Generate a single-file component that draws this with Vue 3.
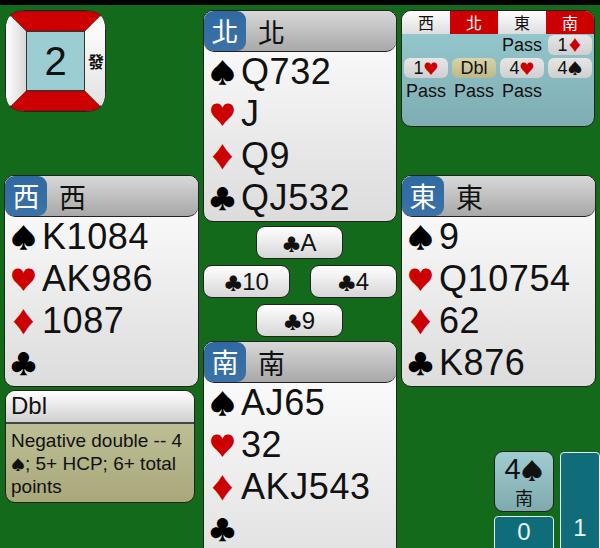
<script setup>
const hands = {
  north: { name: '北', suits: ['Q732', 'J', 'Q9', 'QJ532'] },
  west: { name: '西', suits: ['K1084', 'AK986', '1087', ''] },
  east: { name: '東', suits: ['9', 'Q10754', '62', 'K876'] },
  south: { name: '南', suits: ['AJ65', '32', 'AKJ543', ''] }
}
const suitGlyphs = [
  { g: '♠', red: false },
  { g: '♥', red: true },
  { g: '♦', red: true },
  { g: '♣', red: false }
]
const seats = [
  { n: '西', vul: false },
  { n: '北', vul: true },
  { n: '東', vul: false },
  { n: '南', vul: true }
]
</script>

<template>
  <div class="page">
    <div class="topbar"></div>
    <div class="table">
      <div class="col">
        <div class="board">
          <svg class="board-art" width="101" height="102" viewBox="0 0 101 102">
            <defs>
              <linearGradient id="lside" x1="0" y1="0" x2="1" y2="0">
                <stop offset="0" stop-color="#ffffff" />
                <stop offset="1" stop-color="#d8d8d8" />
              </linearGradient>
              <linearGradient id="rside" x1="0" y1="0" x2="0" y2="1">
                <stop offset="0" stop-color="#ffffff" />
                <stop offset="1" stop-color="#e2e2e2" />
              </linearGradient>
            </defs>
            <rect x="0.5" y="0.5" width="100" height="101" rx="18" fill="#fff" stroke="#222" />
            <path d="M5 6 L21 21 V81 L5 96 Q1 92 1 83 V19 Q1 10 5 6 Z" fill="url(#lside)" />
            <path d="M96 6 L80 21 V81 L96 96 Q100 92 100 83 V19 Q100 10 96 6 Z" fill="url(#rside)" />
            <path d="M5 5 Q10 1 19 1 H82 Q91 1 96 5 L80 21 H21 Z" fill="#cc0000" stroke="#222" stroke-width="0.5" />
            <path d="M5 97 Q10 101 19 101 H82 Q91 101 96 97 L80 81 H21 Z" fill="#cc0000" stroke="#222" stroke-width="0.5" />
          </svg>
          <div class="board-num">2</div>
          <div class="board-dealer">發</div>
        </div>

        <div class="hand">
          <div class="hand-head"><span class="tag">{{ hands.west.name }}</span><span class="hname">{{ hands.west.name }}</span></div>
          <div class="hand-body">
            <div v-for="(s, i) in suitGlyphs" :key="i" class="suit-row">
              <span class="suit" :class="{ red: s.red }">{{ s.g }}</span><span>{{ hands.west.suits[i] }}</span>
            </div>
          </div>
        </div>

        <div class="explain">
          <div class="explain-head">Dbl</div>
          <div class="explain-body">Negative double -- 4 <span class="mini">♠</span>; 5+ HCP; 6+ total points</div>
        </div>
      </div>

      <div class="col">
        <div class="hand">
          <div class="hand-head"><span class="tag">{{ hands.north.name }}</span><span class="hname">{{ hands.north.name }}</span></div>
          <div class="hand-body">
            <div v-for="(s, i) in suitGlyphs" :key="i" class="suit-row">
              <span class="suit" :class="{ red: s.red }">{{ s.g }}</span><span>{{ hands.north.suits[i] }}</span>
            </div>
          </div>
        </div>

        <div class="trick">
          <div class="trick-row center"><div class="played"><span class="psuit">♣</span>A</div></div>
          <div class="trick-row"><div class="played"><span class="psuit">♣</span>10</div><div class="played"><span class="psuit">♣</span>4</div></div>
          <div class="trick-row center"><div class="played"><span class="psuit">♣</span>9</div></div>
        </div>

        <div class="hand south-hand">
          <div class="hand-head"><span class="tag">{{ hands.south.name }}</span><span class="hname">{{ hands.south.name }}</span></div>
          <div class="hand-body">
            <div v-for="(s, i) in suitGlyphs" :key="i" class="suit-row">
              <span class="suit" :class="{ red: s.red }">{{ s.g }}</span><span>{{ hands.south.suits[i] }}</span>
            </div>
          </div>
        </div>
      </div>

      <div class="col">
        <div class="auction">
          <div class="seat-row">
            <div v-for="s in seats" :key="s.n" class="seat" :class="{ vul: s.vul }">{{ s.n }}</div>
          </div>
          <div class="bids">
            <div class="bid"></div>
            <div class="bid"></div>
            <div class="bid">Pass</div>
            <div class="bid chip">1<span class="bsuit red">♦</span></div>
            <div class="bid chip">1<span class="bsuit red">♥</span></div>
            <div class="bid chip gold">Dbl</div>
            <div class="bid chip">4<span class="bsuit red">♥</span></div>
            <div class="bid chip">4<span class="bsuit">♠</span></div>
            <div class="bid">Pass</div>
            <div class="bid">Pass</div>
            <div class="bid">Pass</div>
          </div>
        </div>

        <div class="hand east-hand">
          <div class="hand-head"><span class="tag">{{ hands.east.name }}</span><span class="hname">{{ hands.east.name }}</span></div>
          <div class="hand-body">
            <div v-for="(s, i) in suitGlyphs" :key="i" class="suit-row">
              <span class="suit" :class="{ red: s.red }">{{ s.g }}</span><span>{{ hands.east.suits[i] }}</span>
            </div>
          </div>
        </div>

        <div class="score">
          <div class="score-left">
            <div class="contract">
              <div class="c-bid">4<span class="c-suit">♠</span></div>
              <div class="c-seat">南</div>
            </div>
            <div class="tricks ns">0</div>
          </div>
          <div class="tricks ew">1</div>
        </div>
      </div>
    </div>
  </div>
</template>

<style>
html, body { margin: 0; background: #126a1a; overflow: hidden; }
</style>

<style scoped>
.page {
  width: 600px;
  height: 548px;
  overflow: hidden;
  background: #126a1a;
  font-family: "Liberation Sans", Arial, "Noto Sans CJK TC", sans-serif;
  color: #111;
}
.topbar { height: 5px; background: #000; }
.table {
  display: grid;
  grid-template-columns: 195px 194px 195px;
  column-gap: 4px;
  padding: 5px 0 0 4px;
}
.col { display: flex; flex-direction: column; min-width: 0; }

.board {
  position: relative;
  width: 101px;
  height: 102px;
  margin: 0 0 63px 1px;
}
.board-art { display: block; }
.board-num {
  position: absolute;
  left: 21px;
  top: 21px;
  width: 59px;
  height: 60px;
  box-sizing: border-box;
  border: 1px solid #333;
  background: #9ccdd2;
  text-align: center;
  font-size: 40px;
  line-height: 58px;
}
.board-dealer {
  position: absolute;
  right: 2px;
  top: 41px;
  width: 16px;
  font-size: 16px;
  line-height: 20px;
  text-align: center;
  font-family: "Noto Sans CJK TC", sans-serif;
  font-weight: 700;
}

.hand {
  width: 100%;
  height: 212px;
  box-sizing: border-box;
  border: 1px solid #222;
  border-radius: 10px;
  background: linear-gradient(180deg, #ffffff, #dcdcdc);
  overflow: hidden;
  flex: none;
}
.hand-head {
  display: flex;
  align-items: center;
  height: 41px;
  box-sizing: border-box;
  border-bottom: 1px solid #222;
  border-radius: 0 0 10px 10px;
  background: linear-gradient(180deg, #d8d8d8, #a8a8a8);
}
.tag {
  width: 42px;
  height: 40px;
  border-radius: 9px;
  background: linear-gradient(180deg, #2e6aa0, #3c72a8);
  color: #fff;
  font-size: 27px;
  line-height: 39px;
  text-align: center;
  font-family: "Noto Sans CJK TC", sans-serif;
}
.hname {
  margin-left: 12px;
  font-size: 27px;
  line-height: 39px;
  font-family: "Noto Sans CJK TC", sans-serif;
}
.hand-body { padding-left: 4px; margin-top: -1px; }
.suit-row {
  display: flex;
  align-items: center;
  height: 42px;
  font-size: 36px;
  line-height: 42px;
  letter-spacing: 0.6px;
}
.suit {
  width: 33px;
  flex: none;
  padding-right: 4px;
  box-sizing: border-box;
  text-align: center;
  font-family: "Noto Sans CJK TC", sans-serif;
  font-size: 27px;
  letter-spacing: 0;
  color: #000;
}
.red { color: #cc0000 !important; }

.east-hand { margin-top: 48px; }

.explain {
  width: 190px;
  height: 113px;
  box-sizing: border-box;
  margin: 3px 0 0 1px;
  border: 1px solid #222;
  border-radius: 10px;
  overflow: hidden;
  background: linear-gradient(180deg, #c8c8a2, #a8a87a);
}
.explain-head {
  height: 33px;
  box-sizing: border-box;
  padding-left: 5px;
  border-bottom: 2px solid #444;
  background: linear-gradient(180deg, #ffffff, #cfcfcf);
  font-size: 24px;
  line-height: 30px;
}
.explain-body {
  padding: 5px 4px 0 5px;
  font-size: 19px;
  line-height: 23px;
}
.mini { font-family: "Noto Sans CJK TC", sans-serif; font-size: 14px; line-height: 1; }

.trick {
  display: flex;
  flex-direction: column;
  gap: 6px;
  height: 119px;
  padding-top: 4px;
  box-sizing: border-box;
}
.trick-row { display: flex; justify-content: space-between; }
.trick-row.center { justify-content: center; padding-right: 1px; }
.played {
  width: 87px;
  height: 33px;
  box-sizing: border-box;
  border: 1px solid #222;
  border-radius: 9px;
  background: linear-gradient(180deg, #ffffff, #d6d6d6);
  text-align: center;
  font-size: 24px;
  line-height: 31px;
}
.psuit { font-family: "Noto Sans CJK TC", sans-serif; font-size: 18px; line-height: 1; }

.south-hand { height: 260px; }

.auction {
  width: 194px;
  height: 117px;
  box-sizing: border-box;
  border: 1px solid #222;
  border-radius: 10px;
  overflow: hidden;
  background: linear-gradient(180deg, #98cdd2, #7eacb2);
  flex: none;
}
.seat-row { display: grid; grid-template-columns: repeat(4, 1fr); height: 23px; }
.seat {
  background: linear-gradient(180deg, #ffffff, #dddddd);
  text-align: center;
  font-size: 16px;
  line-height: 23px;
  font-family: "Noto Sans CJK TC", sans-serif;
}
.seat.vul { background: #cc0000; color: #fff; }
.bids {
  display: grid;
  grid-template-columns: repeat(4, 1fr);
  grid-auto-rows: 23px;
}
.bid {
  font-size: 18px;
  line-height: 23px;
  text-align: center;
  white-space: nowrap;
}
.chip {
  margin: 1px 2px;
  line-height: 20px;
  height: 20px;
  border-radius: 6px;
  background: linear-gradient(180deg, #e6e6e6, #cfcfcf);
}
.chip.gold { background: linear-gradient(180deg, #d9d4a8, #bdb888); }
.bsuit { font-family: "Noto Sans CJK TC", sans-serif; font-size: 15px; line-height: 1; }

.score {
  display: flex;
  justify-content: flex-end;
  align-items: flex-start;
  gap: 6px;
  margin-top: 64px;
  margin-right: -4px;
}
.score-left { display: flex; flex-direction: column; gap: 4px; width: 60px; }
.contract {
  width: 60px;
  height: 61px;
  box-sizing: border-box;
  border: 1px solid #222;
  border-radius: 9px;
  background: linear-gradient(180deg, #9fcdd0, #7eaaae);
  text-align: center;
}
.c-bid { font-size: 29px; line-height: 34px; }
.c-suit { font-family: "Noto Sans CJK TC", sans-serif; font-size: 23px; line-height: 1; }
.c-seat { font-size: 18px; line-height: 22px; font-family: "Noto Sans CJK TC", sans-serif; }
.tricks {
  box-sizing: border-box;
  border: 1px solid #e8f4f4;
  border-radius: 4px 4px 0 0;
  background: #0f6d7a;
  color: #e8f4f4;
  font-size: 24px;
  text-align: center;
}
.ns { height: 40px; line-height: 30px; width: 60px; }
.ew { width: 40px; height: 100px; margin-top: 1px; padding-top: 58px; line-height: 34px; }
</style>
